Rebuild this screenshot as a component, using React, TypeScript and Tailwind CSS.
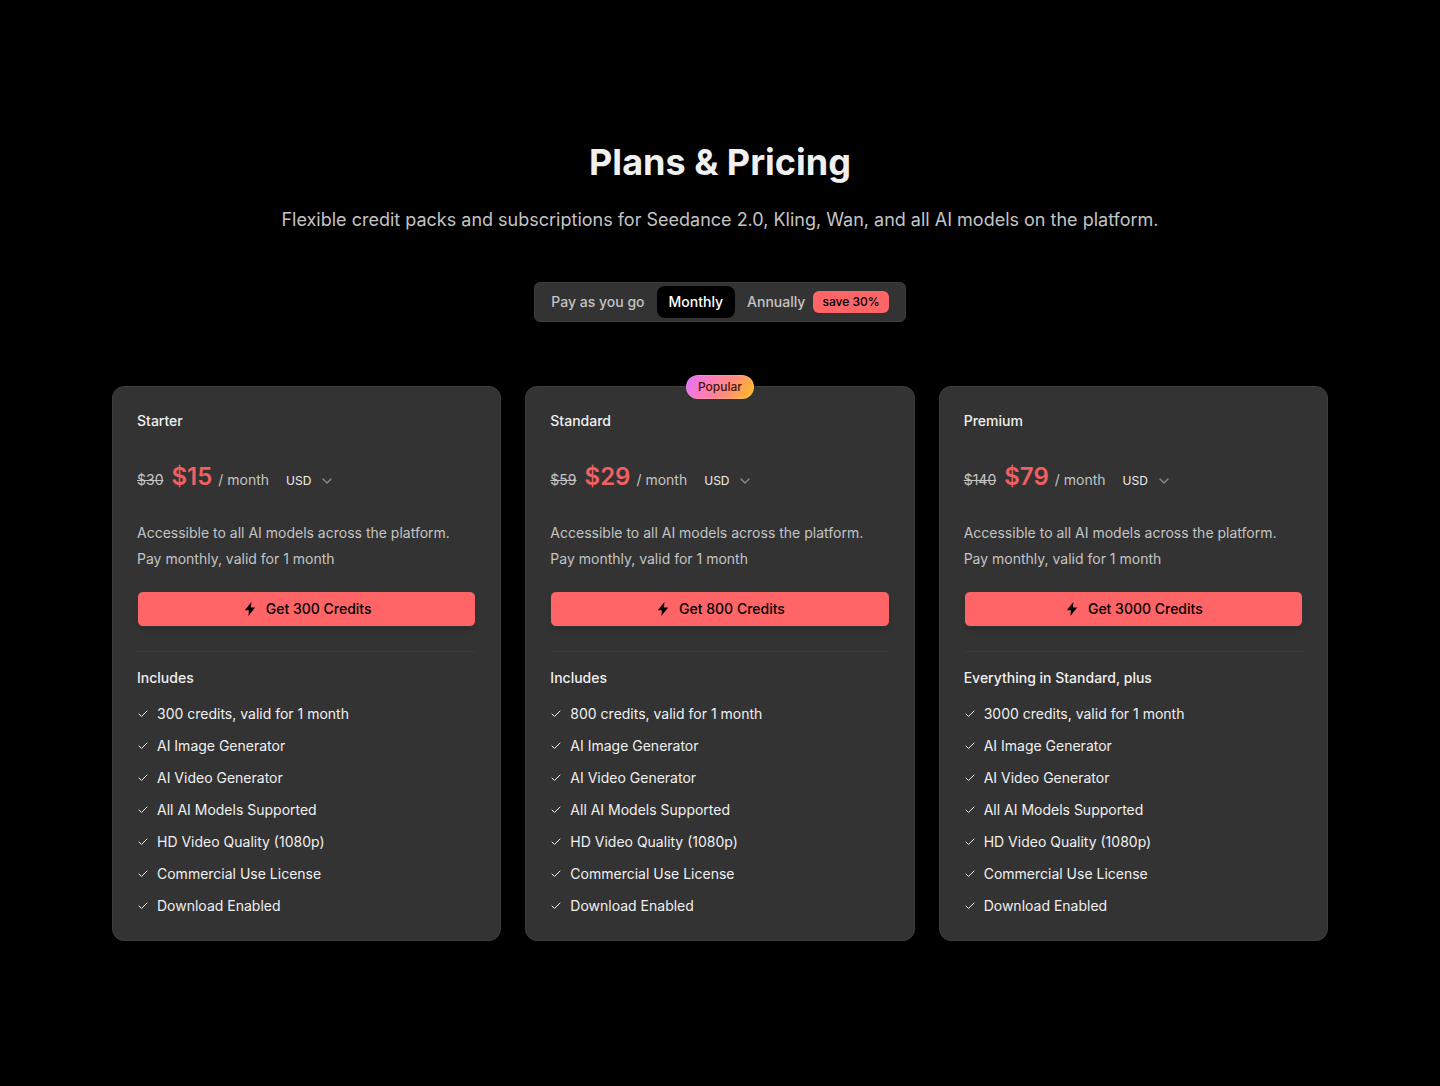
import { useState } from 'react';
import { Check, ChevronDown } from 'lucide-react';
import clsx from 'clsx';

const PERIODS = [
  { id: 'once', label: 'Pay as you go' },
  { id: 'monthly', label: 'Monthly' },
  { id: 'annually', label: 'Annually', badge: 'save 30%' },
];

const SHARED_FEATURES = [
  'AI Image Generator',
  'AI Video Generator',
  'All AI Models Supported',
  'HD Video Quality (1080p)',
  'Commercial Use License',
  'Download Enabled',
];

const PLANS = [
  { name: 'Starter', oldPrice: '$30', price: '$15', credits: 300, listTitle: 'Includes', popular: false },
  { name: 'Standard', oldPrice: '$59', price: '$29', credits: 800, listTitle: 'Includes', popular: true },
  { name: 'Premium', oldPrice: '$140', price: '$79', credits: 3000, listTitle: 'Everything in Standard, plus', popular: false },
];

type Plan = (typeof PLANS)[number];

function BoltIcon() {
  return (
    <svg className="size-4" viewBox="0 0 16 16" fill="currentColor" aria-hidden>
      <path d="M9.4 1L2.8 9.2h4.1L6.4 15l6.8-8.6H9z" />
    </svg>
  );
}

function PlanCard({ plan }: { plan: Plan }) {
  const features = [`${plan.credits} credits, valid for 1 month`, ...SHARED_FEATURES];

  return (
    <section className="relative rounded-xl border border-[#3d3d3d] bg-[#333333] p-6">
      {plan.popular && (
        <span className="absolute -top-3 left-1/2 flex h-6 -translate-x-1/2 items-center rounded-full border border-white/15 bg-linear-[120deg,#d873ff,#ff7ac0_30%,#ff8a80_60%,#ffc21a] bg-origin-border px-[11px] text-xs font-medium text-[#431407]">
          Popular
        </span>
      )}
      <h2 className="text-sm font-medium">{plan.name}</h2>

      <div className="mt-[30px] flex h-10 items-baseline">
        <span className="text-sm text-[#c4c4c4] line-through">{plan.oldPrice}</span>
        <span className="ml-2 text-2xl font-semibold text-[#f06062]">{plan.price}</span>
        <span className="ml-1.5 text-sm text-[#c4c4c4]">/ month</span>
        <span className="relative ml-[17px] flex items-center">
          <select aria-label={`${plan.name} currency`} className="w-[49px] appearance-none bg-transparent text-xs outline-none">
            <option>USD</option>
            <option>EUR</option>
          </select>
          <ChevronDown className="pointer-events-none absolute right-0 size-4 text-[#8c8c8c]" />
        </span>
      </div>

      <p className="mt-[19px] text-sm leading-[26px] text-[#c4c4c4]">
        Accessible to all AI models across the platform.
        <br />
        Pay monthly, valid for 1 month
      </p>

      <button
        type="button"
        className="mt-[19px] flex h-9 w-full items-center justify-center gap-2 rounded-md border border-[#333333] bg-[#ff6467] text-sm font-medium text-black shadow-md"
      >
        <BoltIcon />
        Get {plan.credits} Credits
      </button>

      <hr className="mt-6 border-[#393939]" />

      <h3 className="mt-4 text-sm font-medium">{plan.listTitle}</h3>
      <ul className="mt-4 space-y-3 text-sm">
        {features.map((feature) => (
          <li key={feature} className="flex items-center gap-2">
            <Check className="size-3" strokeWidth={2} />
            {feature}
          </li>
        ))}
      </ul>
    </section>
  );
}

export default function App() {
  const [period, setPeriod] = useState('monthly');

  return (
    <main className="min-h-screen bg-black px-6 pt-[142px] pb-36 font-['Inter',sans-serif] text-[#f0f0f0]">
      <header className="text-center">
        <h1 className="text-4xl leading-10 font-bold">Plans &amp; Pricing</h1>
        <p className="mt-6 text-lg text-[#c4c4c4]">
          Flexible credit packs and subscriptions for Seedance 2.0, Kling, Wan, and all AI models on the platform.
        </p>
      </header>

      <div className="mt-12 flex justify-center">
        <div role="tablist" className="flex h-10 items-center rounded-md border border-[#3d3d3d] bg-[#333333] px-1">
          {PERIODS.map((item) => (
            <button
              key={item.id}
              type="button"
              role="tab"
              aria-selected={period === item.id}
              onClick={() => setPeriod(item.id)}
              className={clsx(
                'flex h-8 items-center gap-2 rounded-lg px-3 text-sm font-medium',
                period === item.id ? 'bg-black text-white' : 'text-[#c4c4c4]'
              )}
            >
              {item.label}
              {item.badge && (
                <span className="rounded-md bg-[#ff6467] px-[9px] py-[3px] text-xs leading-4 font-medium text-black">{item.badge}</span>
              )}
            </button>
          ))}
        </div>
      </div>

      <div className="mx-auto mt-16 grid max-w-[1216px] gap-6 md:grid-cols-3">
        {PLANS.map((plan) => (
          <PlanCard key={plan.name} plan={plan} />
        ))}
      </div>
    </main>
  );
}
